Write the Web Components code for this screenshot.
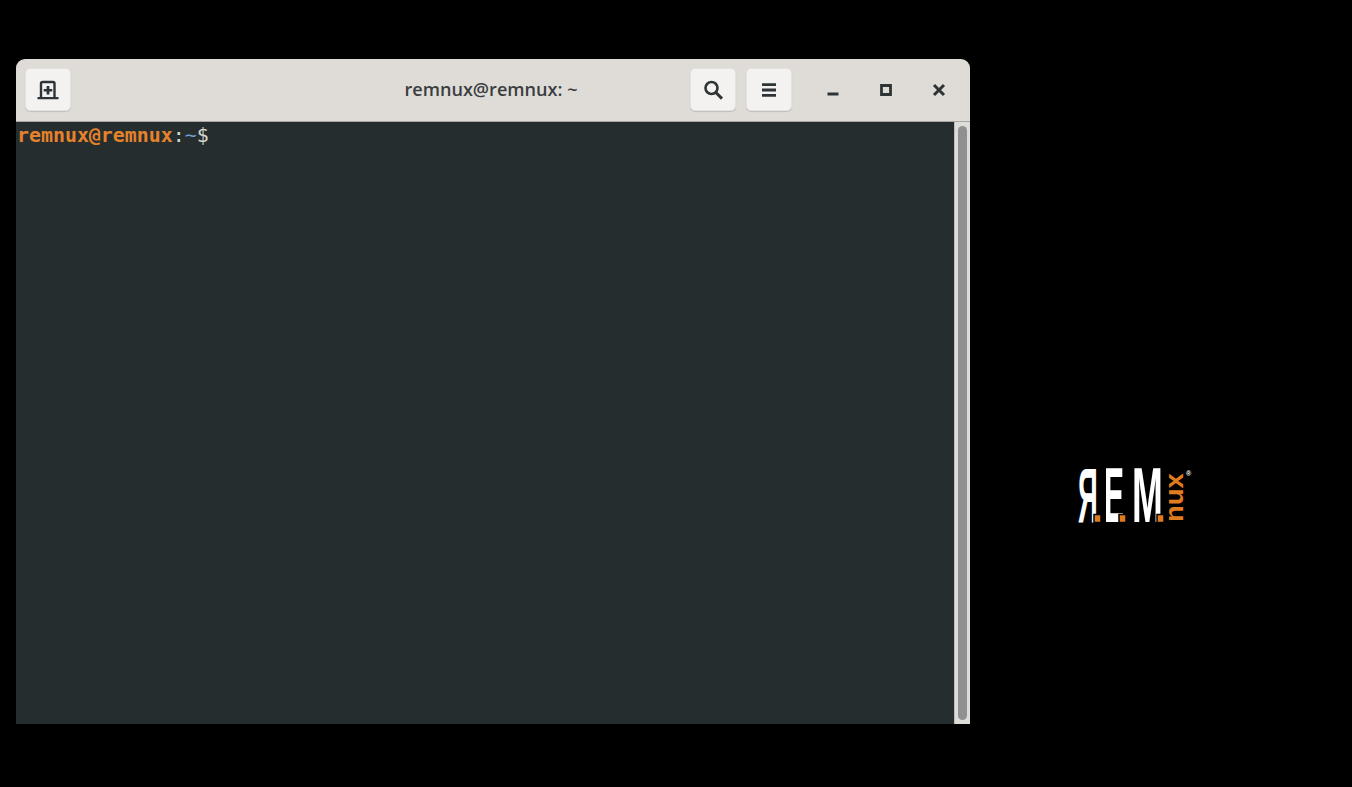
<!DOCTYPE html>
<html>
<head>
<meta charset="utf-8">
<title>remnux@remnux: ~</title>
<style>
  html, body { margin: 0; height: 100%; background: #000; overflow: hidden; }
  body { display: block; }
</style>
</head>
<body>
<remnux-desktop>
  <terminal-window title-text="remnux@remnux: ~"></terminal-window>
  <remnux-logo slot="logo"></remnux-logo>
</remnux-desktop>

<script>
class remnuxDesktop extends HTMLElement {
  constructor() {
    super();
    const shadow = this.attachShadow({ mode: 'open' });
    shadow.innerHTML = `
      <style>
        :host {
          display: grid;
          grid-template-columns: 954px 1fr;
          width: 1352px;
          height: 787px;
          box-sizing: border-box;
          padding: 59px 0 0 16px;
          background: #000;
        }
        .side {
          display: flex;
          justify-content: flex-end;
          padding: 410px 159px 0 0;
        }
      </style>
      <slot></slot>
      <div class="side"><slot name="logo"></slot></div>
    `;
  }
}

class headerButton extends HTMLElement {
  constructor() {
    super();
    const shadow = this.attachShadow({ mode: 'open' });
    shadow.innerHTML = `
      <style>
        :host {
          display: flex;
          align-items: center;
          justify-content: center;
          width: 46px;
          height: 43px;
          box-sizing: border-box;
          border-radius: 5px;
          background: #f3f2f0;
          border: 1px solid #e4e2de;
          box-shadow: 0 1px 1px rgba(0, 0, 0, 0.14);
          color: #2e3436;
        }
        svg { display: block; }
      </style>
      <slot></slot>
    `;
  }
}

class terminalWindow extends HTMLElement {
  constructor() {
    super();
    const shadow = this.attachShadow({ mode: 'open' });
    const title = this.getAttribute('title-text');
    shadow.innerHTML = `
      <style>
        :host {
          display: flex;
          flex-direction: column;
          width: 954px;
          height: 665px;
          border-radius: 9px 9px 0 0;
          overflow: hidden;
          font-family: "Open Sans", "Noto Sans", sans-serif;
        }
        header {
          display: grid;
          grid-template-columns: 1fr auto 1fr;
          align-items: center;
          flex: none;
          height: 63px;
          box-sizing: border-box;
          padding: 9px 19px 10px 9px;
          background: #dfdcd8;
          border-bottom: 1px solid #a8a6a1;
        }
        .title {
          font-size: 18.1px;
          font-weight: 600;
          color: #3a3e40;
          white-space: nowrap;
          transform: translate(3px, -1px);
        }
        .right {
          display: flex;
          align-items: center;
          justify-content: flex-end;
        }
        .right header-button + header-button { margin-left: 10px; }
        .wm {
          display: flex;
          align-items: center;
          justify-content: center;
          width: 24px;
          margin-left: 29px;
          color: #2e3436;
        }
        .wm svg { display: block; }
        .body {
          flex: 1;
          display: flex;
          min-height: 0;
        }
        .term {
          flex: 1;
          background: #262d2e;
          padding: 2px 1px;
          font: normal 19.9px/24px "DejaVu Sans Mono", monospace;
          color: #d3d7cf;
          white-space: pre;
        }
        .user { color: #e5822c; font-weight: bold; }
        .path { color: #729fcf; }
        .bar {
          flex: none;
          width: 16px;
          box-sizing: border-box;
          background: #dedcd8;
          border-left: 1px solid #bdbbb7;
          padding: 4px 3px 4px 3px;
        }
        .thumb {
          height: 100%;
          width: 9px;
          border-radius: 5px;
          background: #8f9190;
        }
      </style>
      <header>
        <div><header-button>
          <svg width="22" height="22" viewBox="0 0 22 22">
            <path d="M4 19V4.5a1.5 1.5 0 0 1 1.5-1.5h10.5a1.5 1.5 0 0 1 1.5 1.5V19" fill="none" stroke="currentColor" stroke-width="2.4"/>
            <path d="M0.5 18h21v2.2H0.5z" fill="currentColor"/>
            <path d="M9.6 7h2.8v2.9h2.9v2.6h-2.9v2.9H9.6v-2.9H6.7V9.9h2.9z" fill="currentColor"/>
          </svg>
        </header-button></div>
        <div class="title">${title}</div>
        <div class="right">
          <header-button>
            <svg width="22" height="22" viewBox="0 0 22 22">
              <circle cx="9.5" cy="9" r="6" fill="none" stroke="currentColor" stroke-width="2.6"/>
              <path d="M13.6 13.2l6.4 6.4" fill="none" stroke="currentColor" stroke-width="3"/>
            </svg>
          </header-button>
          <header-button>
            <svg width="16" height="16" viewBox="0 0 16 16">
              <path d="M1 1.2h14v2.8H1zM1 6.6h14v2.8H1zM1 12h14v2.8H1z" fill="currentColor"/>
            </svg>
          </header-button>
          <div class="wm">
            <svg width="24" height="24" viewBox="0 0 24 24"><path d="M6.5 14.5h11v3h-11z" fill="currentColor"/></svg>
          </div>
          <div class="wm">
            <svg width="24" height="24" viewBox="0 0 24 24"><path d="M7.5 7.5h9v9h-9z" fill="none" stroke="currentColor" stroke-width="2.8"/></svg>
          </div>
          <div class="wm">
            <svg width="24" height="24" viewBox="0 0 24 24"><path d="M7 7l10 10M17 7L7 17" fill="none" stroke="currentColor" stroke-width="3"/></svg>
          </div>
        </div>
      </header>
      <div class="body">
        <div class="term"><span class="user">remnux@remnux</span>:<span class="path">~</span>$</div>
        <div class="bar"><div class="thumb"></div></div>
      </div>
    `;
  }
}

class remnuxLogo extends HTMLElement {
  constructor() {
    super();
    const shadow = this.attachShadow({ mode: 'open' });
    // letters stay real text, only stretched to the logo's tall narrow shape
    shadow.innerHTML = `
      <style>
        :host { display: block; width: 116px; height: 58px; }
        svg { display: block; overflow: visible; }
        text { font-family: "Liberation Sans", sans-serif; font-weight: bold; }
        .big { fill: #fff; font-size: 50px; }
        .nux { fill: #e07b1e; font-size: 25px; }
        .dot { fill: #e07b1e; stroke: #000; stroke-width: 1.5px; }
      </style>
      <svg width="116" height="58" viewBox="0 0 116 58">
        <text class="big" transform="translate(1 53) scale(0.55 1.54)">Я</text>
        <text class="big" transform="translate(27 53) scale(0.6 1.54)">E</text>
        <text class="big" transform="translate(55 53) scale(0.74 1.54)">M</text>
        <rect class="dot" x="17" y="45.5" width="7" height="8"/>
        <rect class="dot" x="42" y="45.5" width="7" height="8"/>
        <rect class="dot" x="80" y="45.5" width="7" height="8"/>
        <text class="nux" transform="translate(106 53) rotate(-90) scale(1.1 1)">nux</text>
        <text x="109" y="7" fill="#fff" font-size="7">®</text>
      </svg>
    `;
  }
}

customElements.define('header-button', headerButton);
customElements.define('terminal-window', terminalWindow);
customElements.define('remnux-logo', remnuxLogo);
customElements.define('remnux-desktop', remnuxDesktop);
</script>
</body>
</html>
